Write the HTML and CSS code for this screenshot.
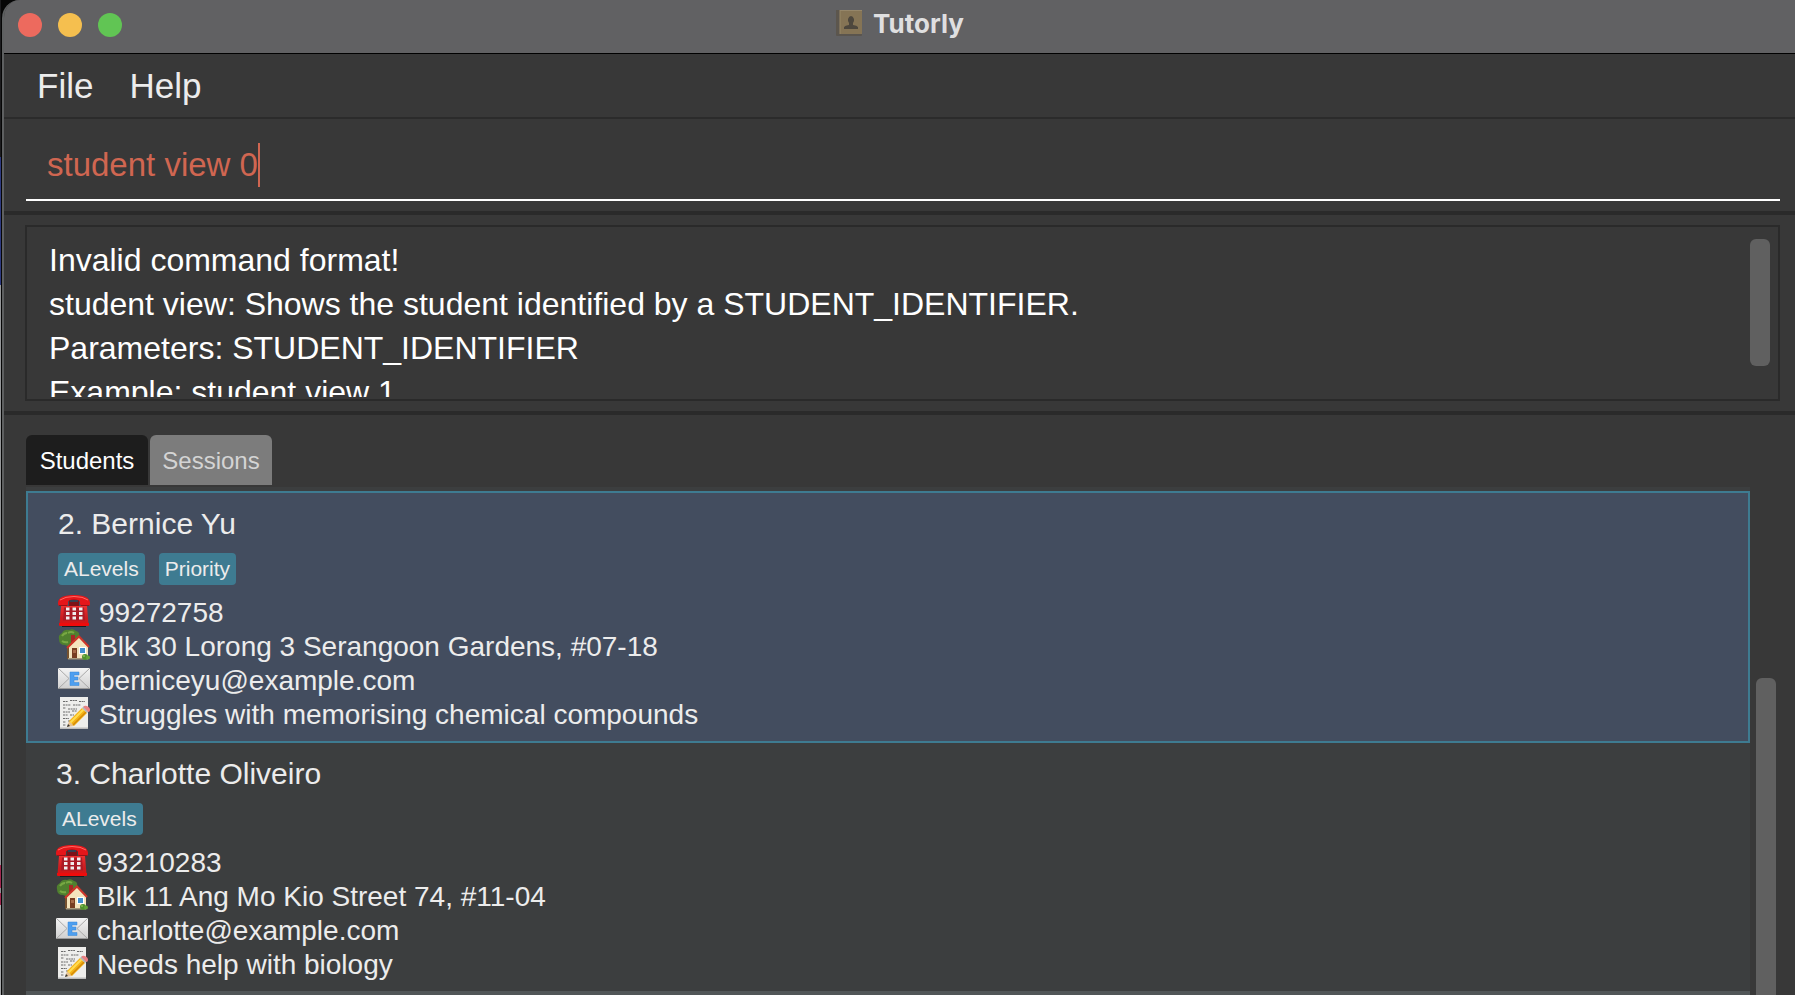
FILE: index.html
```html
<!DOCTYPE html>
<html lang="en">
<head>
<meta charset="utf-8">
<title>Tutorly</title>
<link rel="stylesheet" href="styles.css">
</head>
<body>
<svg class="sprite" aria-hidden="true">
  <defs>
    <linearGradient id="red" x1="0" y1="0" x2="0" y2="1"><stop offset="0" stop-color="#f03030"/><stop offset=".6" stop-color="#c81c20"/><stop offset="1" stop-color="#e01010"/></linearGradient>
    <linearGradient id="paper" x1="0" y1="0" x2="0" y2="1"><stop offset="0" stop-color="#f4f4f4"/><stop offset="1" stop-color="#cfcfcf"/></linearGradient>
    <symbol id="phone" viewBox="0 0 32 32">
      <path d="M4 31h24v1H4z" fill="#1c1c20"/>
      <path d="M3 11h26l1.500 18q0 2-2 2h-25q-2 0-2-2z" fill="url(#red)"/>
      <path d="M1 28h30v2q0 1-1 1H2q-1 0-1-1z" fill="#ee0c0c"/>
      <path d="M11 4h10v7H11z" fill="#7d1218"/>
      <path d="M12 5h8v2h-8z" fill="#344052"/>
      <path d="M0 8C0 2 7 0 16 0s16 2 16 8v1q0 2-2 2h-6q-2 0-2-2V7q0-2.500-6-2.500T10 7v2q0 2-2 2H2q-2 0-2-2z" fill="#e5161a"/>
      <path d="M2 5Q7 1.500 16 1.500T30 5" fill="none" stroke="#ff6a62" stroke-width="1"/>
      <path d="M1 10.500h8M23 10.500h8" stroke="#9c1015" stroke-width="1"/>
      <path d="M6 12.500h20l1 13H5z" fill="#ab1a25"/>
      <path d="M8 12.500h3.500v3H8zM14.500 12.500H18v3h-3.500zM21 12.500h3.500v3H21zM8 17h3.500v3H8zM14.500 17H18v3h-3.500zM21 17h3.500v3H21zM8 21.500h3.500v3H8zM14.500 21.500H18v3h-3.500zM21 21.500h3.500v3H21z" fill="#f1eeee"/>
    </symbol>
    <symbol id="house" viewBox="0 0 32 32">
      <path d="M9 14h4v16H9z" fill="#75512f"/>
      <path d="M1 10Q0 6 4 4q2-4 7-3 4-2 7 1 4 1 3 5l-8 9Q11 18 7 16 1 16 1 10z" fill="#50802f"/>
      <path d="M4 7q2-3 5-3m1 0q3-2 6 0M4 12q3 2 6 1" stroke="#78a843" stroke-width="2" fill="none"/>
      <path d="M11 17 21 8l9 9v13H11z" fill="#f4e4bd"/>
      <path d="M13 6h4v6l-4 3z" fill="#a62a25"/>
      <path d="M9 19 21 7.500 31 18" fill="none" stroke="#cd3529" stroke-width="2"/>
      <path d="M14 19h5v11h-5z" fill="#783e22"/><path d="M15 21h3v3h-3z" fill="#a76a48"/>
      <path d="M21 18h7v7h-7z" fill="#fff"/><path d="M22 19h5v5h-5z" fill="#428fce"/>
      <path d="M10 29h20v1.500H10z" fill="#a99b7e"/>
      <circle cx="27" cy="28" r="3" fill="#4f912e"/><circle cx="30" cy="28.500" r="2" fill="#62a438"/>
      <circle cx="26" cy="27" r="1" fill="#86bf50"/>
    </symbol>
    <symbol id="mail" viewBox="0 0 32 32">
      <path d="M0 5h32v21H0z" fill="url(#paper)"/>
      <path d="M0 5l11 10.500L0 26M32 5 21 15.500 32 26" fill="none" stroke="#a9a9a9" stroke-width="1"/>
      <path d="M0 25.500h32" stroke="#999" stroke-width="1"/>
      <path d="M12 9h9v3h-5v2h4v3h-4v2.500h5v3h-9z" fill="#4d9ff0" stroke="#3787d4" stroke-width=".5"/>
    </symbol>
    <symbol id="memo" viewBox="0 0 32 32">
      <path d="M2 0h28v32H2z" fill="#eeeeec"/><path d="M2 30.500h28V32H2z" fill="#bbb"/>
      <path d="M5 4.500h5m2-1h7m2 1h6M5 8h8m2 0h8M5 11h3m2 1h9M5 15h7m2-1h5M5 18h5m2 0h4M5 21.500h6M5 25h3m2-1h3M5 28h3" stroke="#6b6b6b" stroke-width="1" stroke-dasharray="2 .6"/>
      <path d="M9 30l2-6 5 5z" fill="#e6c293"/><path d="M9 30l1-3 2 2z" fill="#333"/>
      <path d="M11 24 24 11l5 5-13 13z" fill="#f5b315"/><path d="M12.500 25.500 25.500 12.500" stroke="#ffdc50" stroke-width="2"/>
      <path d="M15 28 28 15" stroke="#d48a0a" stroke-width="1.500"/>
      <path d="M24 11l2-2 5 5-2 2z" fill="#b7b7b7"/><path d="M26 9q2-1 4.500 1t1 4.500l-1 .5-5-5z" fill="#ea8083"/>
    </symbol>
  </defs>
</svg>
<div class="desktop">
<div class="window">
  <header class="titlebar">
    <div class="lights"><button class="light close" aria-label="Close"></button><button class="light minimise" aria-label="Minimise"></button><button class="light zoom" aria-label="Zoom"></button></div>
    <h1 class="title">
      <svg class="book" viewBox="0 0 28 28" aria-hidden="true"><rect x="1" y="1" width="26" height="26" rx="1" fill="#5a554e"/><path d="M5 1h22v24H5z" fill="#857455"/><path d="M1 1h4v24H1z" fill="#5c564d"/><path d="M5 1v24" stroke="#988767" stroke-width="1"/><path d="M5 1.500h22" stroke="#958669"/><path d="M9 20v-2q1-1.500 5-2v-2q-1.500-2-1-4 1-3 3-3t3 3q.5 2-1 4v2q4 .5 5 2v2z" fill="#4d473d"/></svg>
      Tutorly
    </h1>
  </header>
  <nav class="menubar"><button class="menu">File</button><button class="menu">Help</button></nav>
  <section class="command">
    <div class="command-line"><input class="command-input" aria-label="Command" value="student view 0" spellcheck="false"><span class="caret"></span></div>
  </section>
  <section class="result">
    <div class="result-box">
      <textarea class="result-text" aria-label="Result" readonly spellcheck="false">Invalid command format!
student view: Shows the student identified by a STUDENT_IDENTIFIER.
Parameters: STUDENT_IDENTIFIER
Example: student view 1</textarea>
      <div class="result-thumb"></div>
    </div>
  </section>
  <main class="content">
    <div class="tabs" role="tablist"><button class="tab active" role="tab" aria-selected="true">Students</button><button class="tab" role="tab" aria-selected="false">Sessions</button></div>
    <div class="list-area">
      <ul class="list">
        <li class="card selected">
          <h2 class="name">2. Bernice Yu</h2>
          <div class="tags"><span class="tag">ALevels</span><span class="tag">Priority</span></div>
          <p class="detail"><svg class="emoji"><use href="#phone"/></svg>99272758</p>
          <p class="detail"><svg class="emoji"><use href="#house"/></svg>Blk 30 Lorong 3 Serangoon Gardens, #07-18</p>
          <p class="detail"><svg class="emoji"><use href="#mail"/></svg>berniceyu@example.com</p>
          <p class="detail"><svg class="emoji"><use href="#memo"/></svg>Struggles with memorising chemical compounds</p>
        </li>
        <li class="card">
          <h2 class="name">3. Charlotte Oliveiro</h2>
          <div class="tags"><span class="tag">ALevels</span></div>
          <p class="detail"><svg class="emoji"><use href="#phone"/></svg>93210283</p>
          <p class="detail"><svg class="emoji"><use href="#house"/></svg>Blk 11 Ang Mo Kio Street 74, #11-04</p>
          <p class="detail"><svg class="emoji"><use href="#mail"/></svg>charlotte@example.com</p>
          <p class="detail"><svg class="emoji"><use href="#memo"/></svg>Needs help with biology</p>
        </li>
        <li class="card next"></li>
      </ul>
      <div class="list-track"><div class="list-thumb"></div></div>
    </div>
  </main>
</div>
</div>
</body>
</html>
```
FILE: styles.css
```css
* { box-sizing: border-box; }
body, h1, h2, p, ul { margin: 0; padding: 0; }
body { font-family: "Liberation Sans", Arial, sans-serif; font-weight: 400; }
button, input, textarea { font: inherit; color: inherit; border: 0; margin: 0; padding: 0; background: none; outline: 0; }
.sprite { position: absolute; width: 0; height: 0; }

.desktop {
  height: 100vh;
  padding-left: 2px;
  overflow: hidden;
  background: linear-gradient(#1c1c1e 0 157px, #2e3a80 157px 285px, #96989a 285px 865px, #a02850 865px 888px, #909294 888px 893px, #a02850 893px 905px, #a8aaac 905px) 0 0 / 1px 100% no-repeat #060606;
}
.window {
  height: 100%;
  display: flex;
  flex-direction: column;
  overflow: hidden;
  border-left: 2px solid #5e6061;
  border-top-left-radius: 18px;
  background: #383838;
  color: #ececec;
}

.titlebar {
  flex: none;
  height: 54px;
  padding: 0 14px;
  display: grid;
  grid-template-columns: 1fr auto 1fr;
  border-bottom: 1px solid #000;
  background: #616163;
}
.lights { display: flex; gap: 16px; padding-top: 13px; }
.light { width: 24px; height: 24px; border-radius: 50%; }
.close { background: #ed6a5e; }
.minimise { background: #f5bf4f; }
.zoom { background: #61c554; }
.title { display: flex; gap: 10px; height: 46px; align-items: center; font-family: Inter, sans-serif; font-size: 26px; font-weight: 700; color: #dfdfe0; }
.book { width: 28px; height: 28px; }

.menubar { flex: none; height: 65px; padding: 0 33px; display: flex; gap: 36px; align-items: center; border-bottom: 2px solid #2b2b2b; font-size: 35px; }

.command { flex: none; height: 96px; padding: 16px 15px 10px 22px; border-bottom: 4px solid #2a2a2a; }
.command-line { display: flex; align-items: center; height: 66px; padding: 0 0 4px 21px; border-bottom: 2px solid #fff; }
.command-input { field-sizing: content; color: #d06651; font-size: 33px; }
.caret { width: 2px; height: 44px; background: #d06651; }

.result { flex: none; height: 200px; padding: 10px 15px 10px 21px; border-bottom: 4px solid #2a2a2a; }
.result-box { height: 176px; display: flex; padding: 11px 8px 2px 22px; border: 2px solid #2a2a2a; }
.result-text { flex: 1; resize: none; overflow: hidden; font-size: 32px; line-height: 44px; color: #fff; }
.result-thumb { width: 20px; height: 127px; margin-top: 1px; border-radius: 6px; background: #606060; }

.content { flex: 1; min-height: 0; display: flex; flex-direction: column; padding: 20px 19px 0 22px; }
.tabs { flex: none; display: flex; gap: 2px; height: 50px; }
.tab { min-width: 122px; padding: 2px 12px 0; border-radius: 6px 6px 0 0; background: #7c7c7c; color: #d4d4d4; font-size: 24px; }
.tab.active { background: #1d1d1d; color: #fff; }
.list-area { flex: 1; min-height: 0; display: flex; gap: 6px; padding-top: 2px; }
.list { flex: 1; list-style: none; padding-top: 4px; background: #3c3e3f; overflow: hidden; }
.card { padding: 10px 30px; background: #3c3e3f; }
.card.selected { border: 2px solid #3e7b91; background: #434d5f; }
.card.next { height: 80px; background: #515658; }
.name { height: 42px; line-height: 42px; font-size: 30px; font-weight: 400; }
.tags { display: flex; gap: 14px; padding: 8px 0 10px; }
.tag { height: 32px; line-height: 32px; padding: 0 6px; border-radius: 4px; background: #3e7b91; font-size: 21px; }
.detail { display: flex; align-items: flex-start; gap: 9px; height: 34px; font-size: 28px; line-height: 36px; }
.emoji { width: 32px; height: 32px; flex: none; }
.list-track { flex: none; width: 20px; padding-top: 191px; display: flex; }
.list-thumb { flex: 1; border-radius: 6px 6px 0 0; background: #606060; }
```
